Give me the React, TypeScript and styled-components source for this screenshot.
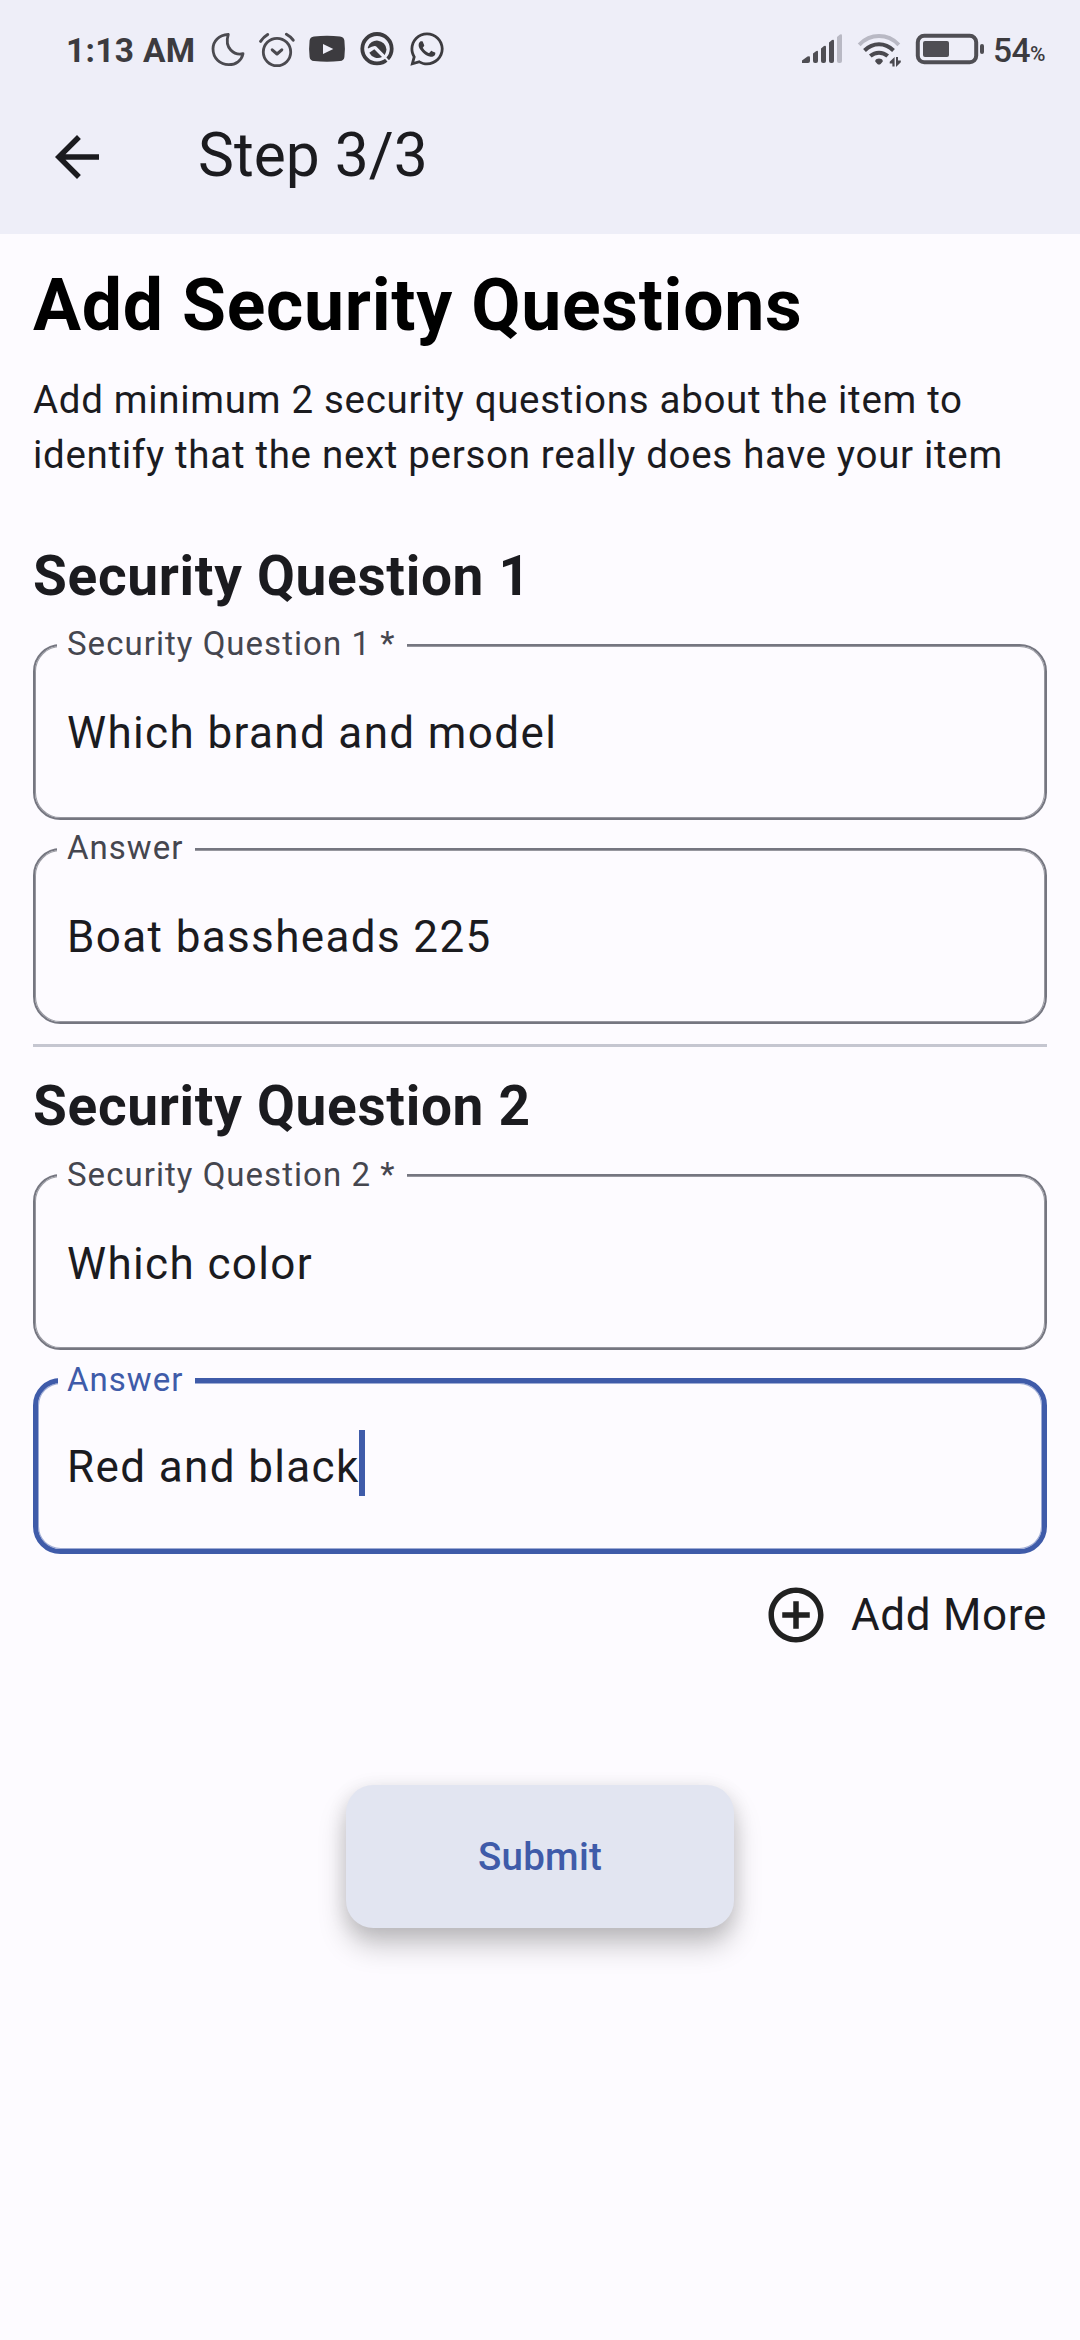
import React from "react";
import styled, { createGlobalStyle } from "styled-components";
import { MdAddCircleOutline, MdArrowBack } from "react-icons/md";
import { FaWhatsapp } from "react-icons/fa";

const color = {
  page: "#fdfbff",
  bar: "#eeeef8",
  ink: "#1b1b1f",
  status: "#3c3b3f",
  label: "#45464f",
  outline: "#757680",
  divider: "#c5c6d0",
  primary: "#3f5ba9",
  button: "#e2e5f1",
};

const GlobalStyle = createGlobalStyle`
  *, *::before, *::after { box-sizing: border-box; }
  body {
    margin: 0;
    background: ${color.page};
    color: ${color.ink};
    font-family: Roboto, "Noto Sans", sans-serif;
  }
  h1, h2, p { margin: 0; }
`;

const Screen = styled.div`
  display: flex;
  flex-direction: column;
  width: 1080px;
  height: 2340px;
  overflow: hidden;
  background: ${color.page};
`;

const StatusBar = styled.div`
  display: flex;
  justify-content: space-between;
  height: 80px;
  padding-left: 66px;
  background: ${color.bar};
  color: ${color.status};
  line-height: 39px;
`;

const StatusGroup = styled.div<{ $width?: number }>`
  display: flex;
  align-items: flex-start;
  width: ${(p) => (p.$width ? `${p.$width}px` : "auto")};
  padding-top: 31px;
`;

const Clock = styled.span`
  width: 145px;
  font-size: 33.5px;
  font-weight: 700;
  letter-spacing: 0.3px;
  white-space: nowrap;
`;

const StatusIcon = styled.svg<{ $gap?: number }>`
  display: block;
  flex: none;
  margin-right: ${(p) => p.$gap ?? 0}px;
  overflow: visible;
`;

const ChatIcon = styled(FaWhatsapp)`
  flex: none;
  width: 38px;
  height: 38px;
  margin-top: -1px;
`;

const Battery = styled.span`
  font-size: 33.5px;
  font-weight: 500;
  letter-spacing: -0.6px;
`;

const Percent = styled.span`
  font-size: 21px;
  font-weight: 500;
  line-height: 46px;
`;

const AppBar = styled.header`
  display: flex;
  align-items: center;
  height: 154px;
  padding-left: 44px;
  background: ${color.bar};
`;

const BackIcon = styled(MdArrowBack)`
  width: 66px;
  height: 66px;
  margin-right: 88px;
`;

const AppTitle = styled.span`
  font-size: 60.5px;
  line-height: 78px;
  margin-top: -3px;
`;

const Content = styled.main`
  display: flex;
  flex-direction: column;
  padding: 30px 33px 0;
`;

const PageTitle = styled.h1`
  color: #000;
  font-size: 71.5px;
  line-height: 84px;
  letter-spacing: 0.69px;
`;

const Intro = styled.p`
  margin: 24px 0 62px;
  font-size: 38.5px;
  line-height: 55px;
  letter-spacing: 0.69px;
`;

const SectionTitle = styled.h2`
  margin-bottom: 36px;
  font-size: 55px;
  line-height: 64px;
  letter-spacing: 0.69px;
`;

const Fields = styled.div`
  display: flex;
  flex-direction: column;
  gap: 28px;
`;

const FieldBox = styled.div<{ $focused?: boolean }>`
  position: relative;
  display: flex;
  align-items: center;
  height: 176px;
  padding-left: 34px;
  font-size: 44px;
  line-height: 66px;
  letter-spacing: 1.375px;

  &::before {
    content: "";
    position: absolute;
    inset: 0;
    border: ${(p) => (p.$focused ? `5px solid ${color.primary}` : `2px solid ${color.outline}`)};
    border-radius: 27.5px;
    box-shadow: inset 0 0 0 1px ${(p) => (p.$focused ? `${color.primary}80` : `${color.outline}c0`)};
  }
`;

const FieldLabel = styled.span<{ $focused?: boolean; $drop: number }>`
  position: absolute;
  top: ${(p) => (p.$focused ? -17 : -19) + p.$drop}px;
  left: ${(p) => (p.$focused ? 25 : 24)}px;
  padding: 0 12px 0 ${(p) => (p.$focused ? 9 : 10)}px;
  background: ${color.page};
  color: ${(p) => (p.$focused ? color.primary : color.label)};
  font-size: 33px;
  line-height: 38px;
  letter-spacing: 1.03px;
  white-space: nowrap;
`;

const FieldValue = styled.span<{ $drop: number }>`
  padding-top: ${(p) => 2 + 2 * p.$drop}px;
`;

const Caret = styled.span`
  width: 6px;
  height: 66px;
  margin-left: -1px;
  margin-top: -6px;
  background: ${color.primary};
`;

const Divider = styled.hr`
  width: 100%;
  height: 3px;
  margin: 20px 0 27px;
  border: 0;
  background: ${color.divider};
`;

const AddMore = styled.div`
  display: flex;
  align-items: center;
  justify-content: flex-end;
  gap: 22px;
  margin-top: 28px;
  font-size: 44px;
  line-height: 66px;
  letter-spacing: 0.69px;
`;

const AddIcon = styled(MdAddCircleOutline)`
  width: 66px;
  height: 66px;
  color: #212121;
`;

const SubmitButton = styled.button`
  align-self: center;
  width: 388px;
  height: 143px;
  margin-top: 137px;
  padding: 0;
  border: 0;
  border-radius: 27.5px;
  background: ${color.button};
  box-shadow:
    0 18px 28px rgba(0, 0, 0, 0.21),
    0 4px 20px rgba(0, 0, 0, 0.11);
  color: ${color.primary};
  font: 500 38.5px/55px Roboto, sans-serif;
  letter-spacing: 0.275px;
`;

function MoonIcon() {
  return (
    <StatusIcon width="34" height="36" viewBox="211 31 34 36" $gap={14} fill="none" stroke="#4b4a50" strokeWidth="2.8" strokeLinejoin="round">
      <path d="M228.3 34.3C218.8 35 213 41.2 213 48.8C213 58.2 220 64.7 228.8 64.7C235.8 64.7 241.6 60.6 243 53.7C234.2 55.6 224 48.2 228.3 34.3Z" />
    </StatusIcon>
  );
}

function AlarmIcon() {
  return (
    <StatusIcon width="36" height="36" viewBox="259 31 36 36" $gap={14} fill="none" stroke="#4b4a50" strokeWidth="2.8" strokeLinecap="round" strokeLinejoin="round">
      <circle cx="277" cy="52" r="13.7" />
      <path d="M272.2 49.8L277 54L281.8 49.8" strokeWidth="3" />
      <path d="M260.6 41.3C262.5 38.5 264.8 36.4 267.7 34.6M293.2 40.2C291.2 37.4 289 35.7 286.4 34.3" strokeWidth="3" />
    </StatusIcon>
  );
}

function VideoIcon() {
  return (
    <StatusIcon width="36" height="36" viewBox="309 31 36 36" $gap={15}>
      <path fill={color.status} fillRule="evenodd" d="M314 36.4Q327 35.2 340 36.4Q344 36.8 344.4 40.5Q345.4 49 344.4 57Q344 60.7 340 61.1Q327 62.3 314 61.1Q310 60.7 309.6 57Q308.6 49 309.6 40.5Q310 36.8 314 36.4ZM323 44V54L333.3 49Z" />
    </StatusIcon>
  );
}

function BadgeIcon() {
  return (
    <StatusIcon width="34" height="36" viewBox="360 31 34 36" $gap={14}>
      <circle cx="377" cy="48.7" r="14.7" fill="none" stroke={color.status} strokeWidth="3.8" />
      <path fill={color.status} d="M367.8 47.2A9.6 9.6 0 0 1 386.5 49.5Q386.2 52.5 384.7 55L376 46.2Q373.6 45 368 48.6Z" />
      <path fill={color.status} d="M369.3 52.8L374.3 49.3L382 57A9.5 9.5 0 0 1 369.3 52.8Z" />
      <path stroke={color.bar} strokeWidth="2" d="M384.8 57.2L391 64" />
    </StatusIcon>
  );
}

function SignalIcon() {
  return (
    <StatusIcon width="42" height="36" viewBox="801 31 42 36" $gap={14} fill="#4f4e54">
      <path d="M802 63V60.4L807.5 56.6Q810 55.4 810 57.4V61Q810 63 808 63Z" />
      <path d="M813 61V53.4L816 51.2Q818 50.2 818 52V61Q818 63 816 63H815Q813 63 813 61Z" />
      <path d="M821 61V48.4L824 46Q826 45 826 47V61Q826 63 824 63H823Q821 63 821 61Z" />
      <path d="M829 61V42.4L832 40Q834 39 834 41V61Q834 63 832 63H831Q829 63 829 61Z" />
      <path fill="#b9b9c4" d="M837 61V37L840 34.6Q842 33.6 842 35.6V61Q842 63 840 63H839Q837 63 837 61Z" />
    </StatusIcon>
  );
}

function WifiIcon() {
  return (
    <StatusIcon width="44" height="36" viewBox="857 31 44 36" $gap={15} fill="none" stroke="#4a494f" strokeWidth="4">
      <path stroke="#b9b9c4" d="M859.2 44.8C870.5 33.2 887.5 33.2 898.8 44.8" />
      <path d="M864.5 50.5C873 42.2 885 42.2 893.5 50.5" />
      <path d="M870.3 56C875.3 51.6 882.7 51.6 887.7 56" />
      <path fill="#4a494f" stroke="none" d="M875.2 61.4Q875 59.8 876.6 59.1Q879 57.9 881.4 59.1Q883 59.8 882.8 61.4L880.6 63.9Q879 65.2 877.4 63.9Z" />
      <path fill="#4a494f" stroke="none" d="M894.6 57V66.6H892.4V63.6H889.7V61.8ZM896 67V57H898V60.4H900.8V62.2Z" />
    </StatusIcon>
  );
}

function BatteryIcon() {
  return (
    <StatusIcon width="68" height="36" viewBox="916 31 68 36" $gap={9}>
      <rect x="917.8" y="35.8" width="58.4" height="26.4" rx="6.5" fill="none" stroke="#4f4e54" strokeWidth="4" />
      <rect x="923" y="41" width="26" height="16" rx="2" fill="#4f4e54" />
      <rect x="980" y="44" width="4" height="10" rx="2" fill="#4f4e54" />
    </StatusIcon>
  );
}

interface FieldProps {
  label: string;
  value: string;
  focused?: boolean;
  drop?: number;
}

function Field({ label, value, focused, drop = 0 }: FieldProps) {
  return (
    <FieldBox $focused={focused}>
      <FieldLabel $focused={focused} $drop={drop}>
        {label}
      </FieldLabel>
      <FieldValue $drop={drop}>{value}</FieldValue>
      {focused && <Caret />}
    </FieldBox>
  );
}

export default function App() {
  return (
    <Screen>
      <GlobalStyle />
      <StatusBar>
        <StatusGroup>
          <Clock>1:13 AM</Clock>
          <MoonIcon />
          <AlarmIcon />
          <VideoIcon />
          <BadgeIcon />
          <ChatIcon />
        </StatusGroup>
        <StatusGroup $width={279}>
          <SignalIcon />
          <WifiIcon />
          <BatteryIcon />
          <Battery>54</Battery>
          <Percent>%</Percent>
        </StatusGroup>
      </StatusBar>
      <AppBar>
        <BackIcon />
        <AppTitle>Step 3/3</AppTitle>
      </AppBar>
      <Content>
        <PageTitle>Add Security Questions</PageTitle>
        <Intro>
          Add minimum 2 security questions about the item to
          <br />
          identify that the next person really does have your item
        </Intro>
        <SectionTitle>Security Question 1</SectionTitle>
        <Fields>
          <Field label="Security Question 1 *" value="Which brand and model" />
          <Field label="Answer" value="Boat bassheads 225" />
        </Fields>
        <Divider />
        <SectionTitle>Security Question 2</SectionTitle>
        <Fields>
          <Field label="Security Question 2 *" value="Which color" drop={1} />
          <Field label="Answer" value="Red and black" focused />
        </Fields>
        <AddMore>
          <AddIcon />
          <span>Add More</span>
        </AddMore>
        <SubmitButton type="button">Submit</SubmitButton>
      </Content>
    </Screen>
  );
}
